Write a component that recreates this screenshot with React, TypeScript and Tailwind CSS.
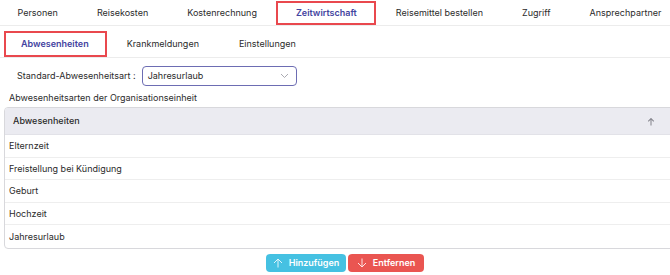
import React from "react";

const topTabs = ["Personen", "Reisekosten", "Kostenrechnung", "Zeitwirtschaft", "Reisemittel bestellen", "Zugriff", "Ansprechpartner"];
const subTabs = ["Abwesenheiten", "Krankmeldungen", "Einstellungen"];
const rows = ["Elternzeit", "Freistellung bei Kündigung", "Geburt", "Hochzeit", "Jahresurlaub"];

export default function App() {
  return (
    <div className="w-[670px] h-[275px] overflow-hidden bg-white text-[#2b2b2b] text-[9px]" style={{ fontFamily: "Inter, 'Noto Sans', sans-serif" }}>
      <div className="flex pt-[1px] border-b border-[#ececec] -ml-[2px] whitespace-nowrap">
        {topTabs.map((t) => (
          <div
            key={t}
            className={
              "h-[24px] px-[19.5px] flex items-center shrink-0 " +
              (t === "Zeitwirtschaft" ? "ring-2 ring-inset ring-[#e9484e] text-[#4343a0] font-semibold" : "")
            }
          >
            {t}
          </div>
        ))}
      </div>
      <div className="flex pt-[5px] pl-[4px] border-b border-[#ececec] whitespace-nowrap">
        {subTabs.map((t, i) => (
          <div
            key={t}
            className={
              "h-[26px] flex items-center shrink-0 " +
              (i === 0 ? "ring-2 ring-inset ring-[#e9484e] text-[#4343a0] font-semibold pl-[17px] pr-[18px]" : "px-[20px]")
            }
          >
            {t}
          </div>
        ))}
      </div>
      <div className="flex items-center mt-[8px] pl-[17px] h-[20px]">
        <span>Standard-Abwesenheitsart :</span>
        <div className="ml-[6px] w-[155px] h-[20px] border border-[#6d6db3] rounded-[4px] flex items-center justify-between pl-[5px] pr-[7px]">
          <span>Jahresurlaub</span>
          <svg width="9" height="6" viewBox="0 0 9 6" fill="none">
            <path d="M1 1l3.5 3.5L8 1" stroke="#a0a0a8" strokeWidth="0.9" />
          </svg>
        </div>
      </div>
      <div className="pl-[9px] mt-[4px] h-[16px] flex items-center">Abwesenheitsarten der Organisationseinheit</div>
      <div className="ml-[4px] mt-[1px] w-[680px] border border-[#d8d8dc] rounded-[4px] overflow-hidden">
        <div className="h-[27px] bg-[#ebebf1] border-b border-[#e2e2e8] flex items-center pl-[8px] pr-[24px] font-medium">
          <span className="flex-1">Abwesenheiten</span>
          <svg width="8" height="9" viewBox="0 0 8 9" fill="none" className="mr-[4px]">
            <path d="M4 8.5V1.5M1.2 4.3L4 1.5l2.8 2.8" stroke="#8a8a92" strokeWidth="1.1" />
          </svg>
        </div>
        {rows.map((r, i) => (
          <div key={r} className={"h-[22.5px] flex items-center pl-[4px] " + (i < rows.length - 1 ? "border-b border-[#eeeeee]" : "")}>
            {r}
          </div>
        ))}
      </div>
      <div className="flex justify-center gap-[2px] mt-[5px] pl-[20px]">
        <button className="h-[18px] w-[80px] rounded-[4px] bg-[#45c1e2] text-white font-semibold flex items-center justify-center gap-[6px]">
          <svg width="10" height="10" viewBox="0 0 10 10" fill="none">
            <path d="M5 9.5V1M1 5l4-4 4 4" stroke="#dff4fb" strokeWidth="1" />
          </svg>
          Hinzufügen
        </button>
        <button className="h-[18px] w-[76px] rounded-[4px] bg-[#ea5551] text-white font-semibold flex items-center justify-center gap-[6px]">
          <svg width="10" height="10" viewBox="0 0 10 10" fill="none">
            <path d="M5 0.5V9M1 5l4 4 4-4" stroke="#fde3e2" strokeWidth="1" />
          </svg>
          Entfernen
        </button>
      </div>
    </div>
  );
}
